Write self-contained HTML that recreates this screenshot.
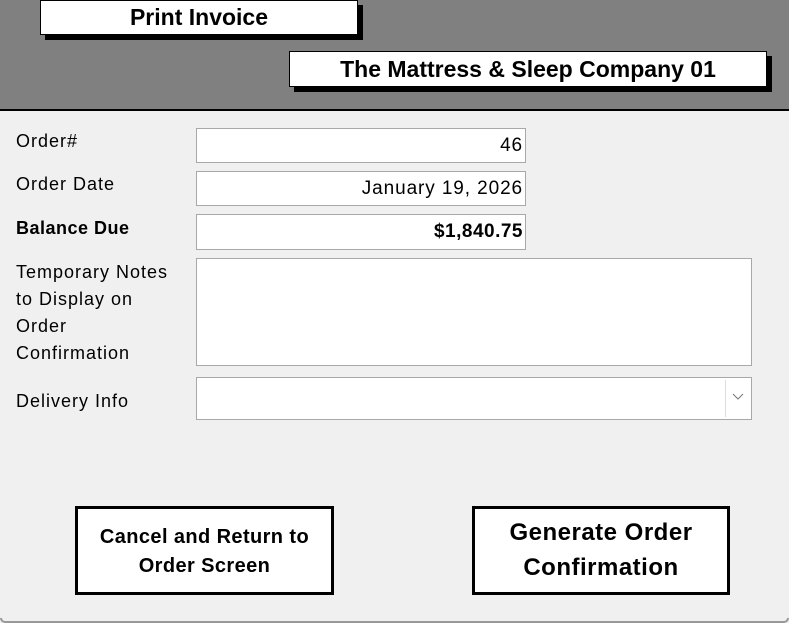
<!DOCTYPE html>
<html><head><style>
*{margin:0;padding:0;box-sizing:border-box}
body{width:789px;height:623px;background:#f0f0f0;position:relative;overflow:hidden;font-family:"Liberation Sans",sans-serif;color:#000}
.hdr{position:absolute;left:0;top:0;width:789px;height:111px;background:#808080;border-bottom:2px solid #000}
.tb{position:absolute;background:#fff;border:1px solid #000;box-shadow:5px 5px 0 #000;font-family:"Liberation Sans",sans-serif;font-weight:bold;text-align:center;font-size:23px}
.lbl{position:absolute;left:16px;font-size:18px;line-height:27px;letter-spacing:1px}
.box{position:absolute;background:#fff;border:1px solid #a8a8a8;font-size:19px;text-align:right;padding-right:2px;letter-spacing:0.9px}
.btn{position:absolute;background:#fff;border:3px solid #000;font-weight:bold;text-align:center;display:flex;align-items:center;justify-content:center}
.bottom{position:absolute;left:0;top:618px;width:789px;height:5px;border:2px solid #999;border-top:none;border-radius:0 0 6px 6px}
</style></head><body>
<div class="hdr"></div>
<div class="tb" style="left:40px;top:0;width:318px;height:35px;line-height:33px">Print Invoice</div>
<div class="tb" style="left:289px;top:51px;width:478px;height:36px;line-height:35px">The Mattress &amp; Sleep Company 01</div>

<div class="lbl" style="top:128px">Order#</div>
<div class="box" style="left:196px;top:128px;width:330px;height:35px;line-height:33px">46</div>
<div class="lbl" style="top:171px">Order Date</div>
<div class="box" style="left:196px;top:171px;width:330px;height:35px;line-height:33px">January 19, 2026</div>
<div class="lbl" style="top:215px;font-weight:bold;letter-spacing:0.5px">Balance Due</div>
<div class="box" style="left:196px;top:214px;width:330px;height:36px;line-height:34px;font-weight:bold;letter-spacing:0.5px">$1,840.75</div>
<div class="lbl" style="top:259px">Temporary Notes<br>to Display on<br>Order<br>Confirmation</div>
<div class="box" style="left:196px;top:258px;width:556px;height:108px"></div>
<div class="lbl" style="top:388px">Delivery Info</div>
<div class="box" style="left:196px;top:377px;width:556px;height:43px">
<div style="position:absolute;left:528px;top:2px;width:1px;height:37px;background:#ddd"></div>
<svg style="position:absolute;left:535px;top:15px" width="12" height="8"><path d="M1 1 L6 6 L11 1" fill="none" stroke="#777" stroke-width="1"/></svg>
</div>

<div class="btn" style="left:75px;top:506px;width:259px;height:89px;font-size:20px;line-height:29px;letter-spacing:0.4px;padding-top:2px">Cancel and Return to<br>Order Screen</div>
<div class="btn" style="left:472px;top:506px;width:258px;height:89px;font-size:24px;line-height:35px;letter-spacing:0.5px;padding-bottom:2px">Generate Order<br>Confirmation</div>
<div class="bottom"></div>
</body></html>
